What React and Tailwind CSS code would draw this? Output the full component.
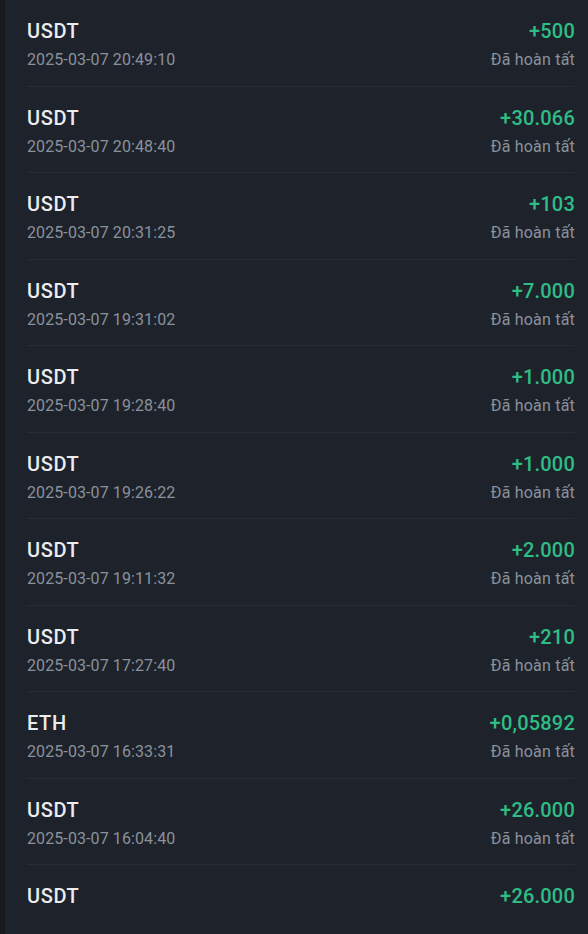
import React from "react";

const rows = [
  ["USDT", "2025-03-07 20:49:10", "+500"],
  ["USDT", "2025-03-07 20:48:40", "+30.066"],
  ["USDT", "2025-03-07 20:31:25", "+103"],
  ["USDT", "2025-03-07 19:31:02", "+7.000"],
  ["USDT", "2025-03-07 19:28:40", "+1.000"],
  ["USDT", "2025-03-07 19:26:22", "+1.000"],
  ["USDT", "2025-03-07 19:11:32", "+2.000"],
  ["USDT", "2025-03-07 17:27:40", "+210"],
  ["ETH", "2025-03-07 16:33:31", "+0,05892"],
  ["USDT", "2025-03-07 16:04:40", "+26.000"],
  ["USDT", null, "+26.000"],
];

export default function App() {
  return (
    <div
      className="flex w-[588px] h-[934px] overflow-hidden bg-[#1e232b]"
      style={{ fontFamily: "Roboto, 'Liberation Sans', sans-serif" }}
    >
      <div className="w-[5px] shrink-0 bg-[#17191c]" />
      <div className="flex-1 pl-[22px] pr-[13px]">
        {rows.map(([coin, date, amt], i) => (
          <div
            key={i}
            className={
              "h-[86.5px] flex justify-between pt-[19px] " +
              (date ? "border-b border-[#272d36]" : "")
            }
          >
            <div className="flex flex-col gap-[7px]">
              <div className="text-[20px] leading-[24px] font-medium tracking-[0.6px] text-[#eaecef]">
                {coin}
              </div>
              {date && (
                <div className="text-[16px] leading-[20px] text-[#8a919c] tracking-[0.1px]">
                  {date}
                </div>
              )}
            </div>
            <div className="flex flex-col items-end gap-[7px]">
              <div className="text-[20px] leading-[24px] font-medium tracking-[0.2px] text-[#2ebd85]">
                {amt}
              </div>
              {date && (
                <div className="text-[16px] leading-[20px] text-[#8a919c] tracking-[0.2px]">
                  Đã hoàn tất
                </div>
              )}
            </div>
          </div>
        ))}
      </div>
    </div>
  );
}
